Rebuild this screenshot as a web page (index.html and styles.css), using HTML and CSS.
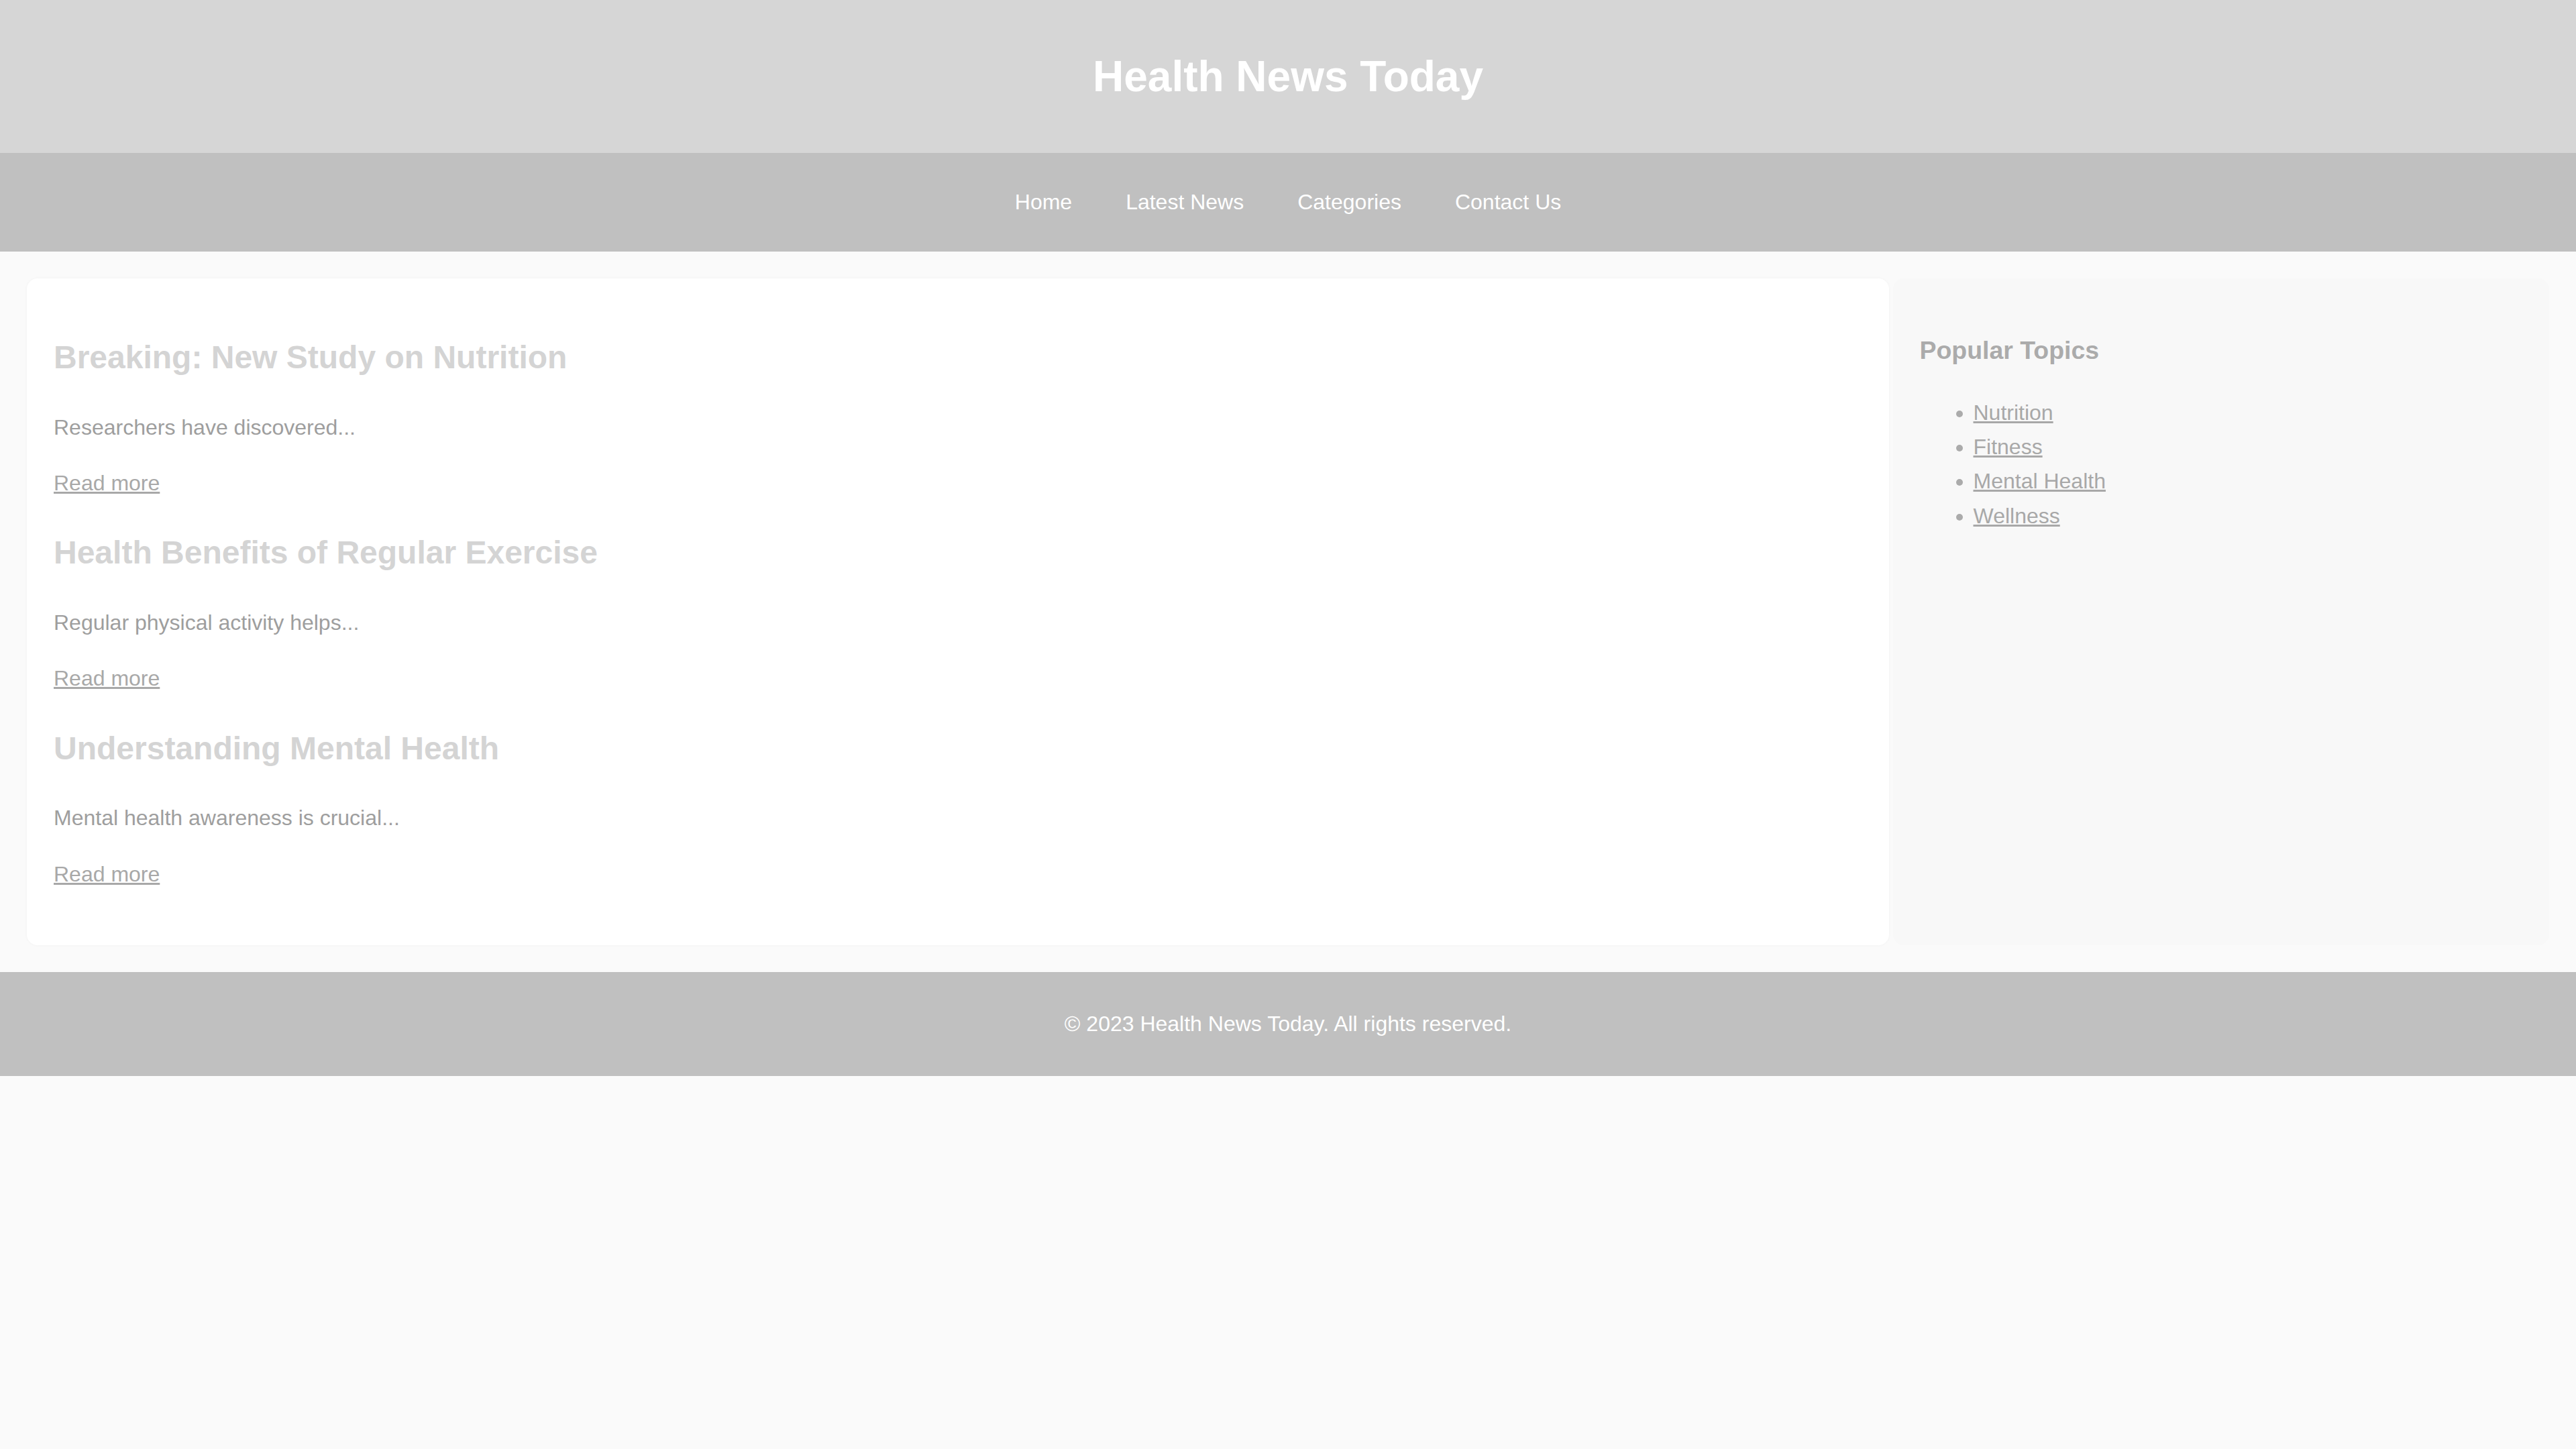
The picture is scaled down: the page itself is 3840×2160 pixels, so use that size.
FILE: index.html
```html
<!DOCTYPE html>
<html lang="en">
<head>
<meta charset="utf-8">
<title>Health News Today</title>
<link rel="stylesheet" href="styles.css">
</head>
<body>
<header class="site-header">
  <h1 class="site-title">Health News Today</h1>
</header>
<nav class="site-nav">
  <ul class="nav-list">
    <li><a class="nav-link" href="#">Home</a></li>
    <li><a class="nav-link" href="#">Latest News</a></li>
    <li><a class="nav-link" href="#">Categories</a></li>
    <li><a class="nav-link" href="#">Contact Us</a></li>
  </ul>
</nav>
<main class="layout">
  <section class="articles">
    <article class="article">
      <h2 class="article-title">Breaking: New Study on Nutrition</h2>
      <p class="article-text">Researchers have discovered...</p>
      <a class="read-more" href="#">Read more</a>
    </article>
    <article class="article">
      <h2 class="article-title">Health Benefits of Regular Exercise</h2>
      <p class="article-text">Regular physical activity helps...</p>
      <a class="read-more" href="#">Read more</a>
    </article>
    <article class="article">
      <h2 class="article-title">Understanding Mental Health</h2>
      <p class="article-text">Mental health awareness is crucial...</p>
      <a class="read-more" href="#">Read more</a>
    </article>
  </section>
  <aside class="sidebar">
    <h3 class="sidebar-title">Popular Topics</h3>
    <ul class="topic-list">
      <li><a class="topic-link" href="#">Nutrition</a></li>
      <li><a class="topic-link" href="#">Fitness</a></li>
      <li><a class="topic-link" href="#">Mental Health</a></li>
      <li><a class="topic-link" href="#">Wellness</a></li>
    </ul>
  </aside>
</main>
<footer class="site-footer">
  <p class="footer-text">&copy; 2023 Health News Today. All rights reserved.</p>
</footer>
</body>
</html>
```

FILE: styles.css
```css
html, body {
  margin: 0;
  padding: 0;
}

body {
  background: #fafafa;
  font-family: "Liberation Sans", Arial, sans-serif;
  font-size: 32px;
  line-height: 1.6;
  color: #9e9e9e;
}

.site-header {
  background: #d6d6d6;
  padding: 77px 0;
  text-align: center;
}

.site-title {
  margin: 0;
  font-size: 64px;
  line-height: 74px;
  font-weight: bold;
  color: #ffffff;
}

.site-nav {
  background: #c0c0c0;
  padding: 48px 0;
}

.nav-list {
  list-style: none;
  margin: 0;
  padding: 0;
  display: flex;
  justify-content: center;
}

.nav-link {
  display: block;
  padding: 0 40px;
  color: #ffffff;
  text-decoration: none;
}

.layout {
  display: flex;
  align-items: stretch;
  gap: 6px;
  padding: 40px;
}

.articles {
  flex: 3 1 0;
  background: #ffffff;
  border-radius: 16px;
  padding: 40px;
  box-shadow: 0 0 4px rgba(0, 0, 0, 0.04);
}

.article {
  margin-bottom: 40px;
}

.article-title {
  font-size: 48px;
  margin: 40px 0;
  color: #d4d4d4;
  font-weight: bold;
}

.article-text {
  margin: 32px 0;
  color: #9e9e9e;
}

.read-more {
  color: #a8a8a8;
  text-decoration: underline;
}

.sidebar {
  flex: 1 1 0;
  background: #f8f8f8;
  border-radius: 16px;
  padding: 40px;
}

.sidebar-title {
  font-size: 37.44px;
  margin: 37.44px 0;
  color: #ababab;
  font-weight: bold;
}

.topic-list {
  margin: 32px 0;
  padding-left: 80px;
  color: #ababab;
}

.topic-link {
  color: #a8a8a8;
  text-decoration: underline;
}

.site-footer {
  background: #c0c0c0;
  padding: 20px 0;
  text-align: center;
}

.footer-text {
  margin: 32px 0;
  color: #ffffff;
}
```
